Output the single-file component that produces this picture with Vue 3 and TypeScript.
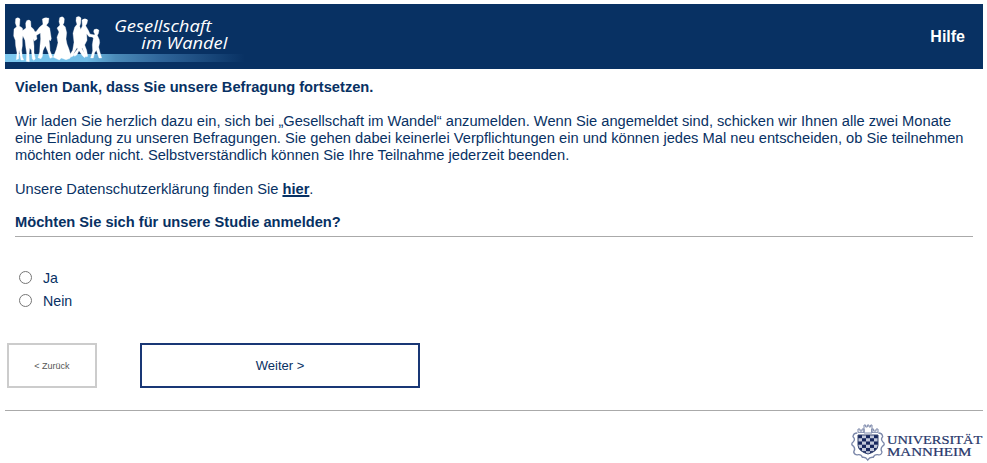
<script setup lang="ts">
import { ref } from 'vue'

interface Choice {
  value: string
  label: string
}

const choices: Choice[] = [
  { value: 'ja', label: 'Ja' },
  { value: 'nein', label: 'Nein' },
]
const selected = ref<string>('')

const checks: { x: number; y: number }[] = []
for (let row = 0; row < 6; row++) {
  for (let col = 0; col < 5; col++) {
    if ((row + col) % 2 === 0) checks.push({ x: 42 + col * 12, y: 60 + row * 9.7 })
  }
}
</script>

<template>
  <div class="page">
    <header class="header">
      <svg class="brand" viewBox="15 12 720 195" role="img" aria-label="Gesellschaft im Wandel">
        <defs>
          <linearGradient id="band" x1="0" x2="1" y1="0" y2="0">
            <stop offset="0" stop-color="#7cc8ef" />
            <stop offset="0.34" stop-color="#70bce5" />
            <stop offset="0.46" stop-color="#4b8bb9" />
            <stop offset="0.65" stop-color="#2f659a" />
            <stop offset="1" stop-color="#083163" />
          </linearGradient>
        </defs>
        <rect x="15" y="162" width="720" height="24" fill="url(#band)" />
        <g class="people">
          <path d="M47 56Q54 50 60 57L59 72L58 78L67 84L70 99L67 118L67 137L65 151L67 170L71 180L63 180L57 150L56 176L49 179L51 158L47 137L46 121L41 108L42 87L50 80L46 69Z" />
          <path d="M80 62Q88 57 92 64L93 80L101 88L109 105L111 117L103 123L100 116L102 138L102 158L106 176L102 181L97 177L94 150L89 144L87 165L88 185L79 184L80 160L77 139L75 121L67 104L69 91L78 84L77 70Z" />
          <path d="M127 57Q137 50 147 55L145 68L139 76L149 84L154 116L151 123L147 119L149 135L150 152L158 172L150 175L143 154L136 137L129 152L127 169L123 176L114 173L119 155L120 137L122 117L121 99L110 106L99 100L96 95L108 95L119 81L129 73Z" />
          <path d="M179 53Q189 47 193 56L192 68L189 74L196 81L200 98L198 117L201 132L207 148L212 165L210 175L198 179L184 174L178 180L160 172L169 148L174 128L171 112L177 96L171 84L180 75L177 65Z" />
          <path d="M229 52Q238 46 243 54L242 70L239 79L245 96L241 121L244 143L257 166L254 173L248 168L231 143L222 159L220 168L211 172L211 162L218 151L222 127L219 100L224 82L231 73L228 63Z" />
          <path d="M246 60Q255 53 263 60L261 70L257 77L265 91L270 102L284 105L284 112L267 110L260 101L261 121L254 135L260 151L263 169L257 171L247 145L239 148L231 164L224 169L220 163L235 144L240 121L238 97L247 78Z" />
          <path d="M282 89Q290 84 297 91L295 101L292 106L298 119L299 128L296 141L300 157L305 174L297 174L289 151L284 158L280 174L272 174L278 152L277 134L280 115L277 110L285 103L281 96Z" />
        </g>
        <g class="brand-text">
          <text x="343" y="95" textLength="292" lengthAdjust="spacingAndGlyphs">Gesellschaft</text>
          <text x="424" y="147" textLength="258" lengthAdjust="spacingAndGlyphs">im Wandel</text>
        </g>
      </svg>
      <a class="help">Hilfe</a>
    </header>

    <main class="content">
      <p><strong>Vielen Dank, dass Sie unsere Befragung fortsetzen.</strong></p>
      <p>
        Wir laden Sie herzlich dazu ein, sich bei „Gesellschaft im Wandel“ anzumelden. Wenn Sie angemeldet sind, schicken wir Ihnen alle zwei Monate<br />
        eine Einladung zu unseren Befragungen. Sie gehen dabei keinerlei Verpflichtungen ein und können jedes Mal neu entscheiden, ob Sie teilnehmen<br />
        möchten oder nicht. Selbstverständlich können Sie Ihre Teilnahme jederzeit beenden.
      </p>
      <p>Unsere Datenschutzerklärung finden Sie <a class="link">hier</a>.</p>
      <h1 class="question">Möchten Sie sich für unsere Studie anmelden?</h1>
      <div class="choices">
        <label v-for="c in choices" :key="c.value" class="choice">
          <input v-model="selected" type="radio" name="anmelden" :value="c.value" />
          <span>{{ c.label }}</span>
        </label>
      </div>
    </main>

    <nav class="buttons">
      <button class="back" type="button">&lt; Zurück</button>
      <button class="next" type="button">Weiter &gt;</button>
    </nav>

    <footer class="footer">
      <svg class="uni" viewBox="15 15 402 129" role="img" aria-label="Universität Mannheim">
        <g fill="none" stroke="#7c88aa" stroke-width="4">
          <path d="M42 52V42H48V48H54V42H60V52ZM83 52V42H89V48H96V42H102V52ZM60 54V30H65V36H70V30H75V36H80V30H84V54Z" stroke-width="3" />
          <path d="M40 54Q28 54 27 65Q35 72 28 80Q18 88 29 94Q35 102 29 111Q32 122 43 119Q52 118 55 127Q65 125 71 135Q78 125 88 127Q91 118 101 119Q112 122 114 111Q108 102 115 94Q126 88 116 80Q109 72 116 65Q115 54 103 54" />
        </g>
        <clipPath id="shield"><path d="M42 60H102V91Q101 109 72 117Q43 109 42 91Z" /></clipPath>
        <g clip-path="url(#shield)">
          <rect x="42" y="60" width="60" height="58" fill="#c2c8da" />
          <rect v-for="(k, i) in checks" :key="i" :x="k.x" :y="k.y" width="12" height="9.7" fill="#17275e" />
        </g>
        <path d="M42 60H102V91Q101 109 72 117Q43 109 42 91Z" fill="none" stroke="#33426f" stroke-width="3" />
        <g class="uni-text">
          <text x="129" y="88" textLength="286" lengthAdjust="spacingAndGlyphs">UNIVERSITÄT</text>
          <text x="129" y="124" textLength="253" lengthAdjust="spacingAndGlyphs">MANNHEIM</text>
        </g>
      </svg>
    </footer>
  </div>
</template>

<style>
body {
  background: #fff;
}
</style>

<style scoped>
.page {
  box-sizing: border-box;
  width: 987px;
  height: 463px;
  padding: 4px 4px 0 5px;
  overflow: hidden;
  color: #083163;
  font: 11pt/17px "Liberation Sans", Arial, sans-serif;
}
.header {
  display: flex;
  justify-content: space-between;
  align-items: center;
  height: 65px;
  padding-right: 18px;
  background: #083163;
}
.brand {
  display: block;
  width: 240px;
  height: 65px;
}
.people {
  fill: #fff;
  stroke: #fff;
  stroke-width: 1px;
}
.brand-text {
  fill: #fff;
  font: italic 50px "Open Sans", "Noto Sans", sans-serif;
}
.help {
  color: #fff;
  font-size: 16px;
  font-weight: bold;
}
.content {
  padding: 10px 10px 0;
}
.content p {
  margin: 0 0 17px;
  letter-spacing: 0.006px;
  white-space: nowrap;
}
.link {
  font-weight: bold;
  text-decoration: underline;
  text-decoration-thickness: 2px;
}
.question {
  height: 22px;
  margin: -1px 0 0;
  border-bottom: 1px solid #aaa;
  font-size: 11pt;
  line-height: 17px;
}
.choices {
  display: flex;
  flex-direction: column;
  gap: 6px;
  padding: 32px 0 0 4px;
}
.choice {
  display: flex;
  align-items: center;
  gap: 11px;
  height: 17px;
  font-size: 14.2px;
}
.choice span {
  padding-top: 2px;
}
.choice input {
  width: 13px;
  height: 13px;
  margin: 0;
}
.buttons {
  display: flex;
  gap: 43px;
  padding: 34px 0 0 2px;
}
.buttons button {
  box-sizing: border-box;
  height: 45px;
  padding: 0;
  background: #fff;
  font-family: inherit;
}
.back {
  width: 90px;
  border: 2px solid #ccc;
  color: #555;
  font-size: 9px;
}
.next {
  width: 280px;
  border: 2px solid #193775;
  color: #083163;
  font-size: 13px;
}
.footer {
  display: flex;
  justify-content: flex-end;
  margin-top: 22px;
  padding-top: 9px;
  border-top: 1px solid #aaa;
}
.uni {
  display: block;
  width: 134px;
  height: 43px;
}
.uni-text {
  fill: #28376b;
  stroke: #28376b;
  stroke-width: 0.7px;
  font: 39px "Liberation Serif", serif;
}
</style>
